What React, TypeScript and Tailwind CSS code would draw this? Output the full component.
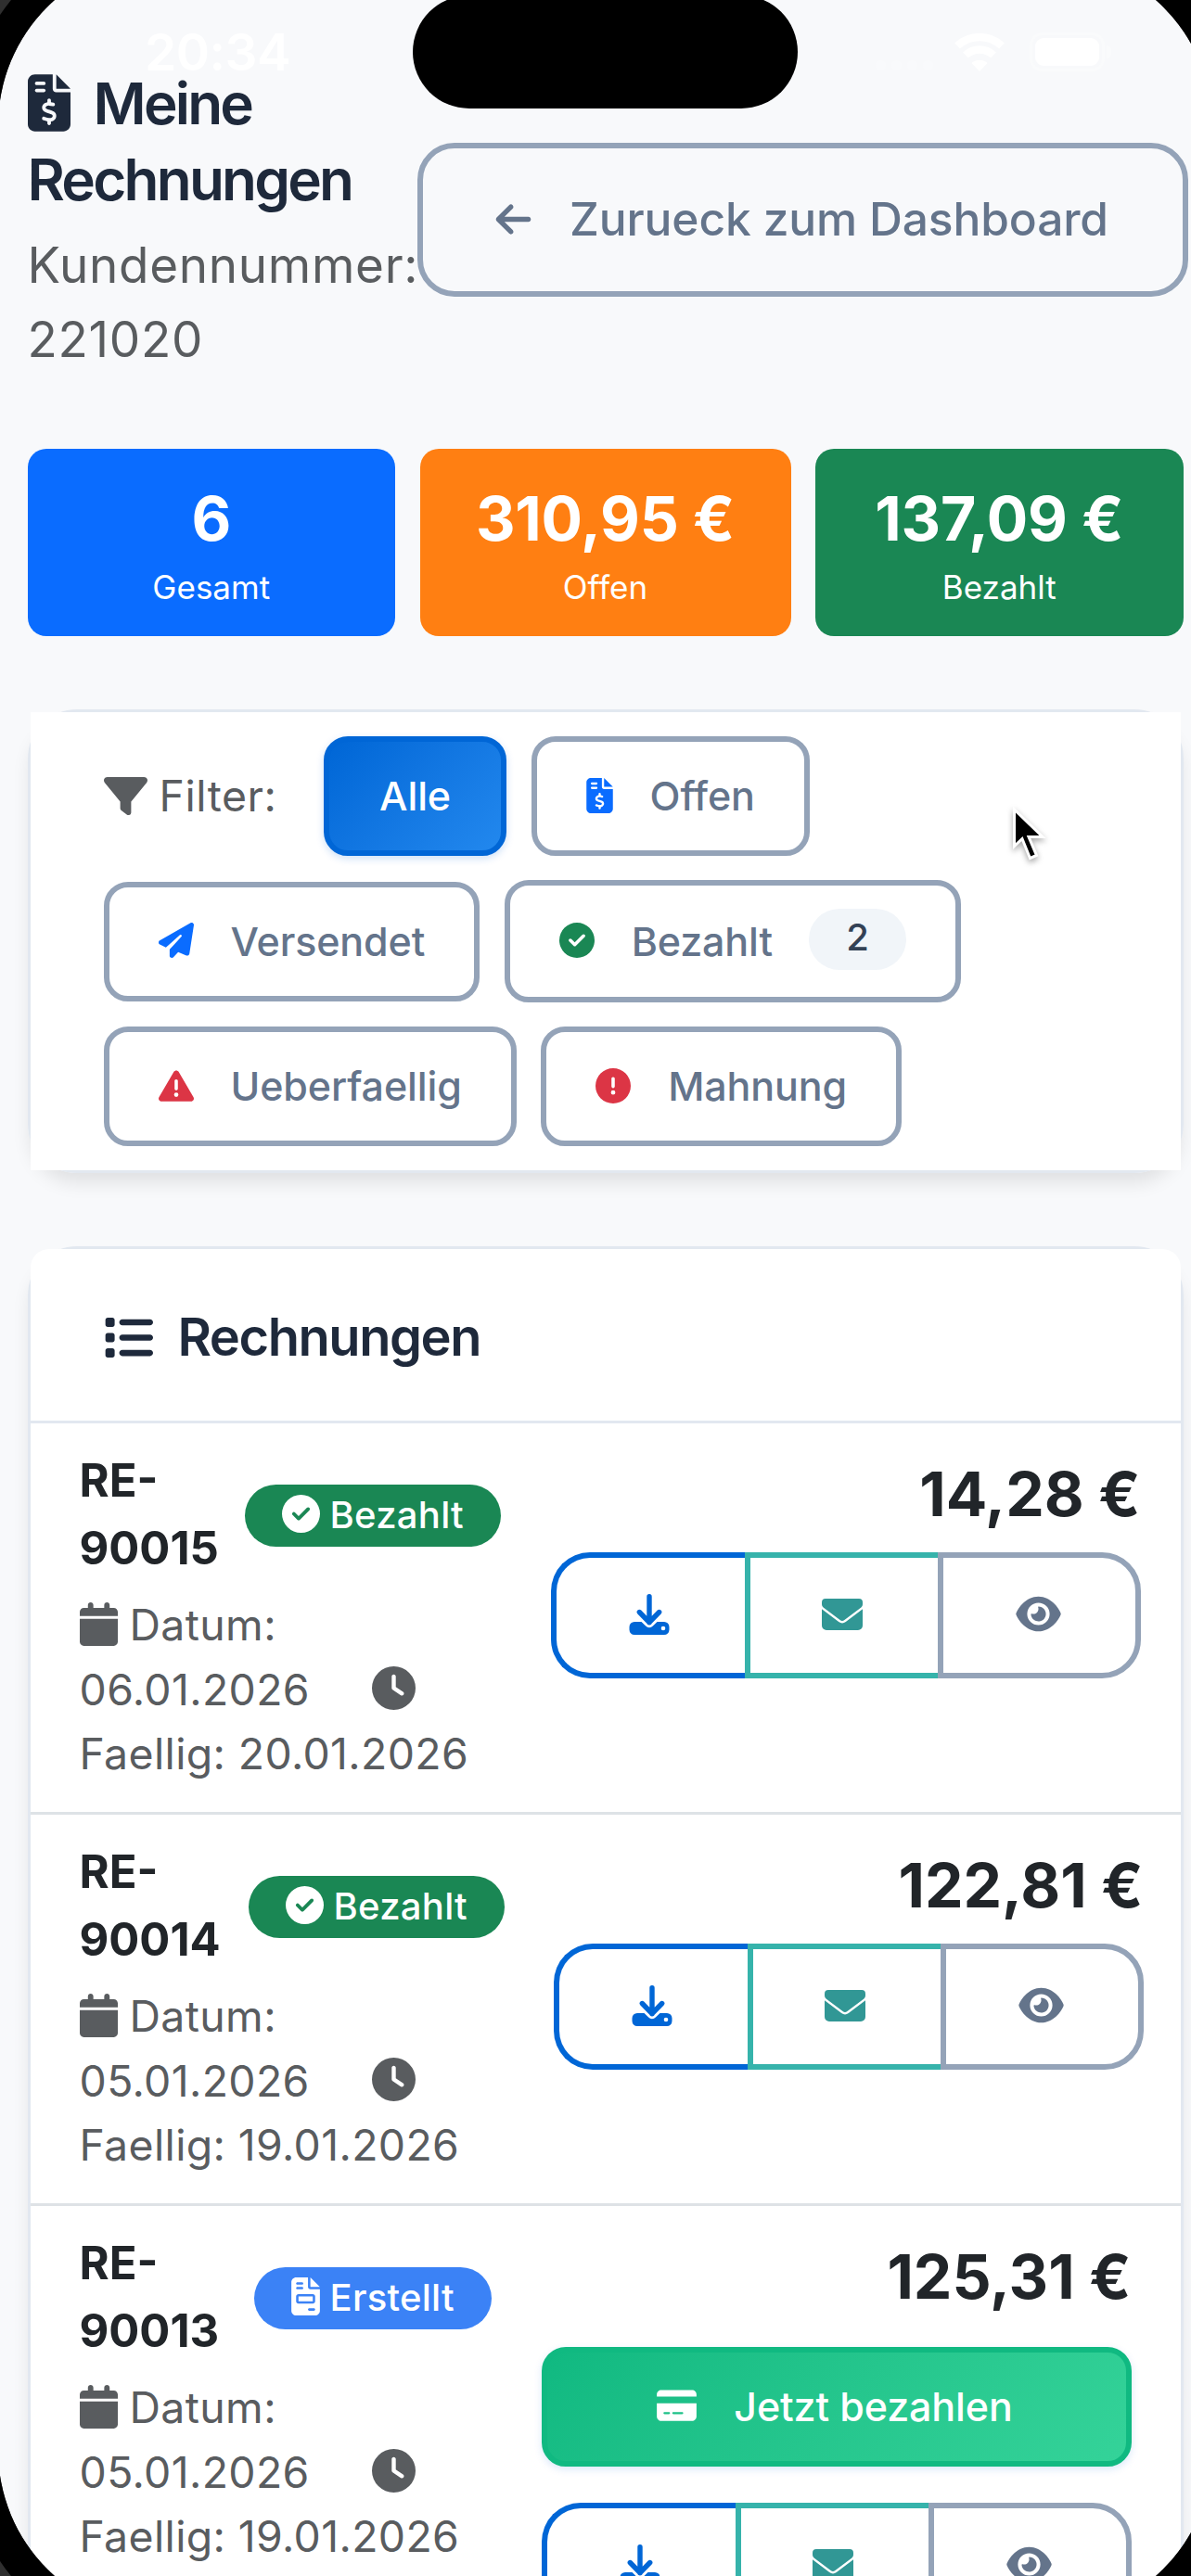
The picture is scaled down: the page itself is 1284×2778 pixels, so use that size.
import type { ReactNode } from "react";
import {
  FaArrowLeft,
  FaCalendar,
  FaCircleCheck,
  FaCircleExclamation,
  FaClock,
  FaCreditCard,
  FaEye,
  FaFileInvoice,
  FaFileInvoiceDollar,
  FaFilter,
  FaList,
  FaPaperPlane,
  FaTriangleExclamation,
} from "react-icons/fa6";
import clsx from "clsx";

interface Invoice {
  number: string;
  status: "bezahlt" | "erstellt";
  date: string;
  due: string;
  amount: string;
  numberClass: string;
  sideClass: string;
}

const invoices: Invoice[] = [
  {
    number: "90015",
    status: "bezahlt",
    date: "06.01.2026",
    due: "20.01.2026",
    amount: "14,28 €",
    numberClass: "w-[178px]",
    sideClass: "mr-[43px]",
  },
  {
    number: "90014",
    status: "bezahlt",
    date: "05.01.2026",
    due: "19.01.2026",
    amount: "122,81 €",
    numberClass: "w-[182px]",
    sideClass: "mr-[40px]",
  },
  {
    number: "90013",
    status: "erstellt",
    date: "05.01.2026",
    due: "19.01.2026",
    amount: "125,31 €",
    numberClass: "w-[188px]",
    sideClass: "mr-[53px]",
  },
];

const stats = [
  { value: "6", label: "Gesamt", className: "w-[396.500px] bg-[#0a6cff]" },
  { value: "310,95 €", label: "Offen", className: "w-[400px] bg-[#ff7f12]" },
  { value: "137,09 €", label: "Bezahlt", className: "w-[396.500px] bg-[#1a8754]" },
];

function DownloadIcon() {
  return (
    <svg viewBox="0 0 44 44" className="h-[44px] w-[44px]" fill="none">
      <path
        d="M6 30h7.5l4.7 4.6a5.4 5.4 0 0 0 7.6 0L30.500 30H38a5.500 5.500 0 0 1 5.500 5.500v3A5.500 5.500 0 0 1 38 44H6a5.500 5.500 0 0 1-5.500-5.500v-3A5.500 5.500 0 0 1 6 30Z"
        fill="currentColor"
      />
      <circle cx="37" cy="37" r="2.300" fill="#fff" />
      <path
        d="M22 2.800v28M11.300 19.500 22 30.500l10.700-11"
        stroke="currentColor"
        strokeWidth="5.400"
        strokeLinecap="round"
        strokeLinejoin="round"
      />
    </svg>
  );
}

function EnvelopeIcon() {
  return (
    <svg viewBox="0 0 44 34" className="h-[34px] w-[44px]" fill="currentColor">
      <path d="M4 0h36a4 4 0 0 1 4 4v2.200a4 4 0 0 1-1.600 3.200L24.400 23a4 4 0 0 1-4.800 0L1.600 9.400A4 4 0 0 1 0 6.200V4a4 4 0 0 1 4-4Z" />
      <path d="M0 11.200 18.200 25a6.300 6.300 0 0 0 7.600 0L44 11.200V29a5 5 0 0 1-5 5H5a5 5 0 0 1-5-5V11.200Z" />
    </svg>
  );
}

function StatusBar() {
  return (
    <div className="absolute inset-x-0 top-0 h-[120px] text-white">
      <span className="absolute left-[156px] top-[35px] text-[55px] font-semibold leading-[42px] tracking-[-0.01em]">
        20:34
      </span>
      <div className="absolute left-[445px] top-[-5px] h-[122px] w-[415px] rounded-full bg-black" />
      <div className="absolute left-[944px] top-[65px] flex gap-[6px]">
        {[0, 1, 2, 3].map((dot) => (
          <span key={dot} className="h-[11px] w-[11px] rounded-full bg-[#f9fafc]" />
        ))}
      </div>
      <svg
        viewBox="0 0 54 42"
        className="absolute left-[1029px] top-[35px] h-[42px] w-[54px]"
        fill="none"
        stroke="currentColor"
        strokeWidth="8.500"
      >
        <path d="M3 14.500a35 35 0 0 1 48 0" />
        <path d="M12 24.500a22 22 0 0 1 30 0" />
        <path d="M18.500 33a13 13 0 0 1 17 0L27 42Z" fill="currentColor" stroke="none" />
      </svg>
      <div className="absolute left-[1110px] top-[35px] h-[42px] w-[81px] rounded-[14px] border-[3px] border-[#fafbfc] p-[3px]">
        <div className="h-full w-full rounded-[9px] bg-white" />
      </div>
      <div className="absolute left-[1193px] top-[49px] h-[14px] w-[5px] rounded-r-full bg-[#fafbfc]" />
    </div>
  );
}

function FilterButton({
  icon,
  children,
  badge,
}: {
  icon: ReactNode;
  children: ReactNode;
  badge?: string;
}) {
  return (
    <button
      className={clsx(
        "flex items-center rounded-[26px] border-[6.6px] border-[#94a3b8] px-[53px] text-[43px] font-medium tracking-[-0.003em] text-[#64748b]",
        badge ? "h-[132px]" : "h-[129px]"
      )}
    >
      <span className="-mt-[2px] mr-[40px] text-[38px]">{icon}</span>
      {children}
      {badge && (
        <span className="-mt-[5px] ml-[39px] flex h-[66px] w-[105px] items-center justify-center rounded-full bg-[#f1f5f9] pb-[3px] text-[40px] text-[#334155]">
          {badge}
        </span>
      )}
    </button>
  );
}

function StatusBadge({ status }: { status: Invoice["status"] }) {
  const paid = status === "bezahlt";
  return (
    <span
      className={clsx(
        "mt-[2px] flex h-[67px] items-center gap-[11px] rounded-full px-[40px] text-[40px] font-medium tracking-[0.007em] text-white",
        paid ? "bg-[#1a8754]" : "bg-[#3b82f6]"
      )}
    >
      {paid ? (
        <FaCircleCheck className="-mt-[4px] text-[41px]" />
      ) : (
        <FaFileInvoice className="-mt-[4px] h-[41px] w-[31px]" />
      )}
      {paid ? "Bezahlt" : "Erstellt"}
    </span>
  );
}

function InvoiceRow({ invoice }: { invoice: Invoice }) {
  return (
    <div className="flex h-[422px] shrink-0 justify-between border-b-[3.3px] border-[#dee2e6] pl-[53px] pt-[25px]">
      <div>
        <div className="flex items-center">
          <strong
            className={clsx(
              "text-[49px] font-bold leading-[73px] text-[#212529]",
              invoice.numberClass
            )}
          >
            RE-
            <br />
            {invoice.number}
          </strong>
          <StatusBadge status={invoice.status} />
        </div>
        <div className="mt-[12px] text-[46.400px] leading-[69.500px] tracking-[0.008em] text-[#595c5f]">
          <div className="flex items-center">
            <FaCalendar className="-mt-[3px] mr-[13px] h-[47px] w-[41px]" />
            Datum:
          </div>
          <div className="flex items-center">
            {invoice.date}
            <FaClock className="-mt-[3px] ml-[67px] text-[47px]" />
          </div>
          <div>Faellig: {invoice.due}</div>
        </div>
      </div>

      <div className={clsx("w-[636px] pt-[11px]", invoice.sideClass)}>
        <div className="text-right text-[66px] font-bold leading-[80px] text-[#212529]">
          {invoice.amount}
        </div>
        {invoice.status === "erstellt" && (
          <button className="mb-[39px] mt-[36px] flex h-[129px] w-full items-center justify-center rounded-[26px] border-[6.6px] border-[#10b981] bg-linear-135 from-[#10b981] to-[#34d399] pr-[3px] text-[43px] font-medium tracking-[-0.003em] text-white shadow-[0_3px_8px_rgba(0,102,214,0.15)]">
            <FaCreditCard className="-mt-[3px] mr-[40px] h-[38px] w-[43px]" />
            Jetzt bezahlen
          </button>
        )}
        <div className="mt-[23px] flex h-[136px]">
          <button className="flex w-[209px] items-center justify-center rounded-l-[42px] border-[6.6px] border-r-0 border-[#0066d6] pb-[3px] pr-[3px] text-[#0066d6]">
            <DownloadIcon />
          </button>
          <button className="flex w-[208px] items-center justify-center border-[6.6px] border-r-0 border-[#36b3ab] pb-[3px] pr-[4px] text-[#319795]">
            <EnvelopeIcon />
          </button>
          <button className="flex w-[219px] items-center justify-center rounded-r-[42px] border-[6.6px] border-[#94a3b8] pb-[3px] pr-[2px] text-[#64748b]">
            <FaEye className="h-[43px] w-[49px]" />
          </button>
        </div>
      </div>
    </div>
  );
}

export default function App() {
  return (
    <div className="relative h-[2778px] w-[1284px] overflow-hidden bg-[#f8f9fb] font-['Inter','Liberation_Sans',sans-serif]">
      <StatusBar />

      <div className="flex h-full flex-col pl-[29.500px] pt-[71px]">
        <header className="flex h-[335px] shrink-0 items-center">
          <div className="w-[420px] shrink-0">
            <h1 className="text-[62px] font-semibold leading-[82px] tracking-[-0.045em] text-[#1e293b]">
              <FaFileInvoiceDollar className="-mt-[12px] mr-[25px] inline h-[62px] w-[46px]" />
              Meine
              <br />
              Rechnungen
            </h1>
            <p className="mt-[12px] text-[53px] leading-[79.500px] tracking-[0.013em] text-[#595c5f]">
              Kundennummer:
              <br />
              221020
            </p>
          </div>
          <button className="-mt-[3px] flex h-[166px] w-[831px] shrink-0 items-center justify-center rounded-[40px] border-[6.6px] border-[#94a3b8] pb-[2px] pr-[3px] text-[49.700px] font-medium tracking-[-0.003em] text-[#64748b]">
            <FaArrowLeft className="mr-[39px] text-[43px]" />
            Zurueck zum Dashboard
          </button>
        </header>

        <div className="mt-[78px] flex shrink-0 gap-[26.500px]">
          {stats.map((stat) => (
            <div
              key={stat.label}
              className={clsx(
                "flex h-[202px] flex-col items-center rounded-[20px] pt-[35px] text-white",
                stat.className
              )}
            >
              <div className="text-[66px] font-bold leading-[80px] tracking-[-0.003em]">
                {stat.value}
              </div>
              <div className="mt-[9px] text-[35px] leading-[50px]">{stat.label}</div>
            </div>
          ))}
        </div>

        <section className="mt-[79px] w-[1246px] shrink-0 rounded-[53px] border-[3.3px] border-[#e2e8f0] shadow-[0_13px_20px_-3px_rgba(0,0,0,0.1)]">
          <div className="flex flex-wrap items-center gap-x-[26.500px] gap-y-[26px] bg-white px-[79px] py-[26px]">
            <div className="mr-[24px] flex items-center text-[46.400px] tracking-[0.012em] text-[#595c5f]">
              <FaFilter className="mr-[13px] text-[47px]" />
              Filter:
            </div>
            <button className="h-[129px] w-[197px] rounded-[26px] border-[6.6px] border-[#0066d6] bg-linear-135 from-[#0066d6] to-[#2288ee] text-[43px] font-medium tracking-[-0.003em] text-white shadow-[0_3px_8px_rgba(0,102,214,0.2)]">
              Alle
            </button>
            <FilterButton icon={<FaFileInvoiceDollar className="h-[38px] w-[29px] text-[#0a6cff]" />}>
              Offen
            </FilterButton>
            <FilterButton icon={<FaPaperPlane className="text-[#0a6cff]" />}>Versendet</FilterButton>
            <FilterButton icon={<FaCircleCheck className="text-[#1a8754]" />} badge="2">
              Bezahlt
            </FilterButton>
            <FilterButton icon={<FaTriangleExclamation className="text-[#dc3545]" />}>
              Ueberfaellig
            </FilterButton>
            <FilterButton icon={<FaCircleExclamation className="text-[#dc3545]" />}>
              Mahnung
            </FilterButton>
          </div>
        </section>

        <section className="mt-[79px] w-[1246px] shrink-0 rounded-[53px] border-[3.3px] border-[#e2e8f0] shadow-[0_13px_20px_-3px_rgba(0,0,0,0.1)]">
          <div className="rounded-t-[20px] bg-white">
            <h2 className="flex h-[188px] items-center border-b-[3.3px] border-[#e2e8f0] pl-[79px] pt-[5px] text-[56px] font-semibold tracking-[-0.026em] text-[#1e293b]">
              <FaList className="mr-[27px] text-[53px]" />
              Rechnungen
            </h2>
            {invoices.map((invoice) => (
              <InvoiceRow key={invoice.number} invoice={invoice} />
            ))}
          </div>
        </section>
      </div>

      {/* mouse pointer */}
      <svg
        viewBox="0 0 40 66"
        className="absolute left-[1089px] top-[867px] h-[66px] w-[40px] drop-shadow-[0_3px_3px_rgba(0,0,0,0.35)]"
      >
        <path
          d="M4.500 6v39.500l8.500-8 8.500 21 7-3-8.500-20H35Z"
          fill="#000"
          stroke="#fff"
          strokeWidth="3"
        />
      </svg>

      {/* device frame around the rounded screen */}
      <div className="pointer-events-none absolute -bottom-[45px] -left-[2px] -right-[23px] -top-[45px] rounded-[180px] shadow-[0_0_0_34px_#000,0_0_0_120px_#2f2f2f]" />
    </div>
  );
}
